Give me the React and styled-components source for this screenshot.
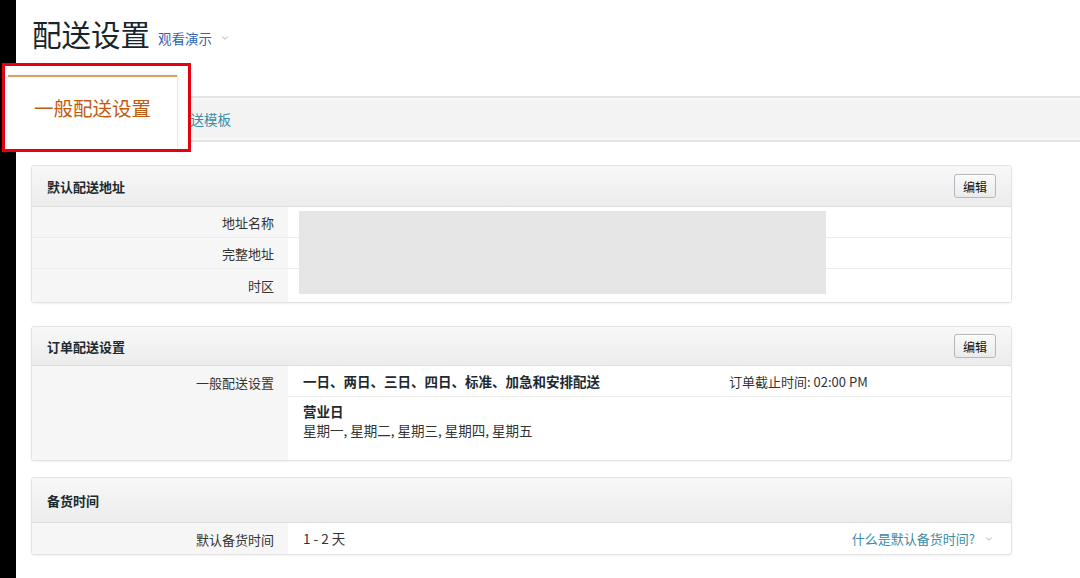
import styled, { createGlobalStyle } from 'styled-components';
import { ChevronDown } from 'lucide-react';

const GlobalStyle = createGlobalStyle`
  html, body {
    margin: 0;
    padding: 0;
    background: #fff;
  }
  body {
    font-family: "Noto Sans CJK SC", "Noto Sans", "Liberation Sans", sans-serif;
    color: #111;
    overflow: hidden;
  }
  * {
    box-sizing: border-box;
  }
`;

const addressRows = ['地址名称', '完整地址', '时区'];

const App = () => {
  return (
    <>
      <GlobalStyle />
      <Shell>
        <SideStrip />
        <Main>
          <TitleRow>
            <PageTitle>配送设置</PageTitle>
            <DemoLink>
              观看演示
              <ChevronDown size={10} strokeWidth={2} color="#9aa4ad" />
            </DemoLink>
          </TitleRow>

          <TabBar>
            <TabLink>配送模板</TabLink>
          </TabBar>

          <Panel $top={23}>
            <PanelHeader $height={41}>
              <PanelTitle>默认配送地址</PanelTitle>
              <EditButton type="button">编辑</EditButton>
            </PanelHeader>
            <AddressGrid>
              {addressRows.map((label, idx) => (
                <Row key={label}>
                  <LabelCell $row={idx + 1} $last={idx === addressRows.length - 1}>
                    {label}
                  </LabelCell>
                  <ValueCell $row={idx + 1} $last={idx === addressRows.length - 1} />
                </Row>
              ))}
              <Redacted />
            </AddressGrid>
          </Panel>

          <Panel $top={23}>
            <PanelHeader $height={39}>
              <PanelTitle>订单配送设置</PanelTitle>
              <EditButton type="button">编辑</EditButton>
            </PanelHeader>
            <SplitBody>
              <LabelColumn>一般配送设置</LabelColumn>
              <div>
                <ShippingRow>
                  <StrongText>一日、两日、三日、四日、标准、加急和安排配送</StrongText>
                  <CutoffText>订单截止时间: 02:00 PM</CutoffText>
                </ShippingRow>
                <BusinessDays>
                  <StrongText>营业日</StrongText>
                  <PlainText>星期一, 星期二, 星期三, 星期四, 星期五</PlainText>
                </BusinessDays>
              </div>
            </SplitBody>
          </Panel>

          <Panel $top={16}>
            <PanelHeader $height={45}>
              <PanelTitle>备货时间</PanelTitle>
            </PanelHeader>
            <SplitBody>
              <LabelColumn>默认备货时间</LabelColumn>
              <HandlingRow>
                <PlainText>1 - 2 天</PlainText>
                <HelpLink>
                  什么是默认备货时间?
                  <ChevronDown size={10} strokeWidth={2} color="#a0a8b0" />
                </HelpLink>
              </HandlingRow>
            </SplitBody>
          </Panel>
        </Main>

        <Callout>
          <CalloutTab>一般配送设置</CalloutTab>
        </Callout>
      </Shell>
    </>
  );
};

export default App;

const Shell = styled.div`
  position: relative;
  display: flex;
  width: 1080px;
  height: 578px;
  overflow: hidden;
`;

const SideStrip = styled.div`
  width: 16px;
  flex: none;
  background: #000;
`;

const Main = styled.main`
  flex: 1;
  min-width: 0;
`;

const TitleRow = styled.div`
  display: flex;
  align-items: baseline;
  gap: 8px;
  padding: 10px 0 0 16px;
  height: 96px;
`;

const PageTitle = styled.h1`
  margin: 0;
  font-size: 29.5px;
  line-height: 46px;
  font-weight: 400;
  color: #17242b;
`;

const DemoLink = styled.a`
  display: inline-flex;
  align-items: center;
  gap: 8px;
  font-size: 13.5px;
  color: #2f66b3;
  position: relative;
  top: -2px;
`;

const TabBar = styled.nav`
  height: 46px;
  display: flex;
  align-items: center;
  padding-left: 161px;
  background: #f3f3f3;
  border-top: 2px solid #e4e4e4;
  border-bottom: 2px solid #e4e4e4;
  box-shadow: inset 0 2px 0 #f8f8f8, inset 0 -2px 0 #f8f8f8;
`;

const TabLink = styled.span`
  font-size: 13.5px;
  color: #3a8ba5;
`;

const Panel = styled.section`
  width: 981px;
  margin: ${(p) => p.$top}px 0 0 15px;
  border: 1px solid #e3e3e3;
  border-radius: 3px;
  box-shadow: 0 1px 2px rgba(0, 0, 0, 0.06);
  overflow: hidden;
`;

const PanelHeader = styled.header`
  height: ${(p) => p.$height}px;
  display: flex;
  align-items: center;
  justify-content: space-between;
  padding: 0 15px;
  background: linear-gradient(#f8f8f8, #ececec);
  border-bottom: 1px solid #dedede;
`;

const PanelTitle = styled.h3`
  margin: 0;
  font-size: 13px;
  font-weight: 700;
  color: #1c2a30;
`;

const EditButton = styled.button`
  width: 42px;
  height: 24px;
  padding: 0;
  font-family: inherit;
  font-size: 12px;
  color: #111;
  background: linear-gradient(#fafafa, #e9ebee);
  border: 1px solid #b4b7bc;
  border-radius: 3px;
  box-shadow: 0 1px 0 rgba(255, 255, 255, 0.6) inset;
`;

const AddressGrid = styled.div`
  display: grid;
  grid-template-columns: 256px 1fr;
  grid-template-rows: 31px 31px 33px;
`;

const Row = styled.div`
  display: contents;
`;

const LabelCell = styled.div`
  grid-column: 1;
  grid-row: ${(p) => p.$row};
  display: flex;
  align-items: center;
  justify-content: flex-end;
  padding-right: 14px;
  font-size: 13px;
  color: #333;
  background: #f6f6f6;
  border-bottom: ${(p) => (p.$last ? 'none' : '1px solid #ececec')};
`;

const ValueCell = styled.div`
  grid-column: 2;
  grid-row: ${(p) => p.$row};
  background: #fff;
  border-bottom: ${(p) => (p.$last ? 'none' : '1px solid #ececec')};
`;

const Redacted = styled.div`
  grid-column: 2;
  grid-row: 1 / 4;
  align-self: stretch;
  width: 527px;
  margin: 4px 0 8px 11px;
  background: #e6e6e6;
  z-index: 1;
`;

const SplitBody = styled.div`
  display: grid;
  grid-template-columns: 256px 1fr;
`;

const LabelColumn = styled.div`
  background: #f6f6f6;
  text-align: right;
  padding: 7px 14px 0 0;
  font-size: 13px;
  color: #333;
  min-height: 31px;
`;

const ShippingRow = styled.div`
  height: 31px;
  display: flex;
  align-items: center;
  padding-left: 15px;
  border-bottom: 1px solid #ececec;
`;

const StrongText = styled.div`
  font-size: 13.5px;
  font-weight: 700;
  color: #1c2a30;
  line-height: 19px;
`;

const CutoffText = styled.span`
  margin-left: auto;
  width: 282px;
  font-size: 13px;
  color: #333;
`;

const BusinessDays = styled.div`
  height: 63px;
  padding: 5px 0 0 15px;
`;

const PlainText = styled.div`
  font-size: 13.5px;
  color: #333;
  line-height: 19px;
`;

const HandlingRow = styled.div`
  height: 31px;
  display: flex;
  align-items: center;
  justify-content: space-between;
  padding: 0 17px 0 15px;
`;

const HelpLink = styled.a`
  display: inline-flex;
  align-items: center;
  gap: 9px;
  font-size: 13px;
  color: #3a8ba5;
`;

const Callout = styled.div`
  position: absolute;
  left: 2px;
  top: 63px;
  width: 189px;
  height: 89px;
  padding: 9px 11px 1px 3px;
  border: 3px solid #e60012;
  background: #fff;
`;

const CalloutTab = styled.div`
  height: 100%;
  display: flex;
  align-items: center;
  justify-content: center;
  padding-bottom: 10px;
  font-size: 19.5px;
  color: #c35a12;
  background: #fff;
  border-top: 2px solid #d9a45a;
  box-shadow: 1px 0 0 #e8e8e8, 0 0 3px rgba(0, 0, 0, 0.08);
`;
